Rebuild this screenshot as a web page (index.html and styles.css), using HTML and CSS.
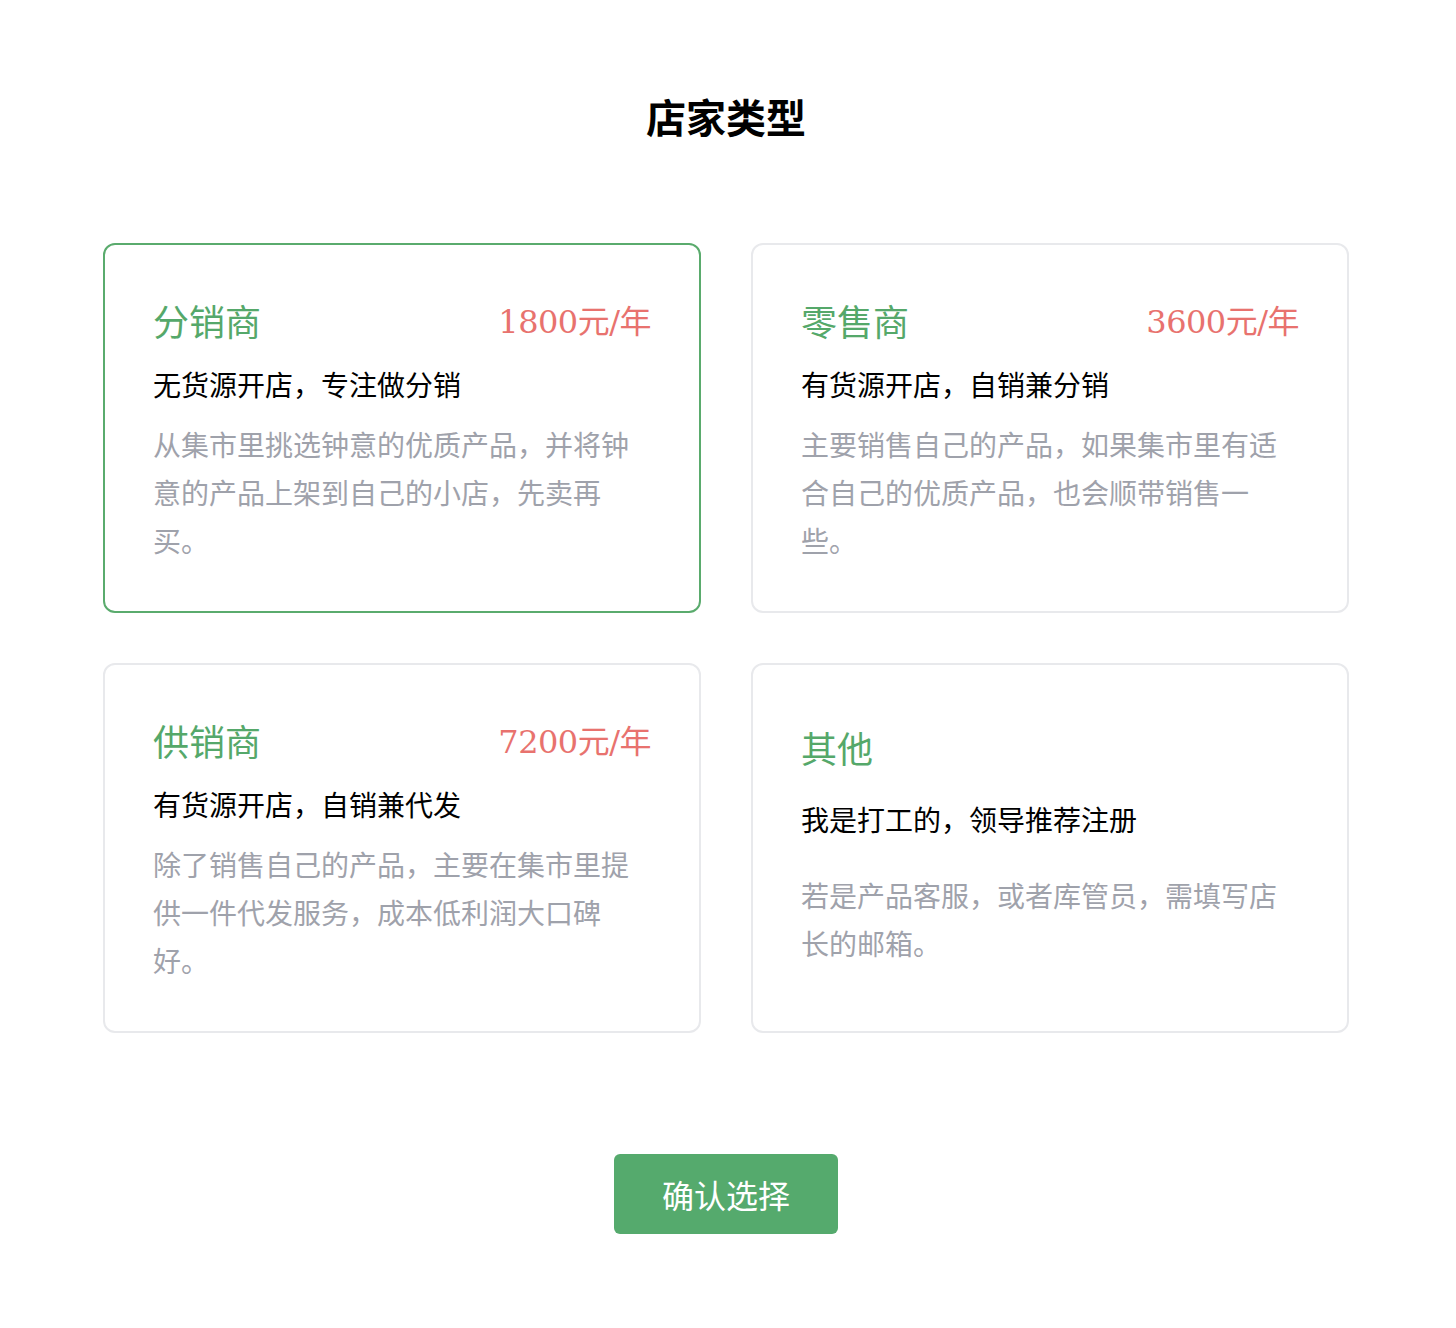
FILE: index.html
```html
<!DOCTYPE html>
<html lang="zh-CN">
<head>
<meta charset="utf-8">
<title>店家类型</title>
<link rel="stylesheet" href="styles.css">
</head>
<body>
<div class="page">
  <h1 class="page-title">店家类型</h1>
  <div class="grid">
    <div class="card selected">
      <div class="card-head"><span class="card-title">分销商</span><span class="price">1800元/年</span></div>
      <div class="card-sub">无货源开店，专注做分销</div>
      <div class="card-desc">从集市里挑选钟意的优质产品，并将钟意的产品上架到自己的小店，先卖再买。</div>
    </div>
    <div class="card">
      <div class="card-head"><span class="card-title">零售商</span><span class="price">3600元/年</span></div>
      <div class="card-sub">有货源开店，自销兼分销</div>
      <div class="card-desc">主要销售自己的产品，如果集市里有适合自己的优质产品，也会顺带销售一些。</div>
    </div>
    <div class="card">
      <div class="card-head"><span class="card-title">供销商</span><span class="price">7200元/年</span></div>
      <div class="card-sub">有货源开店，自销兼代发</div>
      <div class="card-desc">除了销售自己的产品，主要在集市里提供一件代发服务，成本低利润大口碑好。</div>
    </div>
    <div class="card other">
      <div class="card-head"><span class="card-title">其他</span></div>
      <div class="card-sub">我是打工的，领导推荐注册</div>
      <div class="card-desc">若是产品客服，或者库管员，需填写店长的邮箱。</div>
    </div>
  </div>
  <div class="actions"><button class="btn">确认选择</button></div>
</div>
</body>
</html>
```

FILE: styles.css
```css
* { box-sizing: border-box; }
body {
  margin: 0;
  background: #fff;
  font-family: "Noto Sans CJK SC", "Noto Sans", sans-serif;
}
.page {
  width: 1452px;
  padding-top: 88px;
  padding-bottom: 95px;
}
.page-title {
  margin: 0;
  text-align: center;
  font-size: 40px;
  line-height: 56px;
  font-weight: 700;
  color: #000;
}
.grid {
  margin: 99px auto 0;
  width: 1246px;
  display: grid;
  grid-template-columns: 598px 598px;
  grid-auto-rows: 370px;
  gap: 50px;
}
.card {
  border: 2px solid #e8e9ec;
  border-radius: 12px;
  padding: 47px 48px 48px;
}
.card.selected { border-color: #5aab6d; }
.card-head {
  display: flex;
  justify-content: space-between;
  align-items: center;
  height: 56px;
}
.card-title {
  font-size: 36px;
  color: #55a86a;
  line-height: 56px;
}
.price {
  font-family: "DejaVu Serif", "Liberation Serif", "Noto Sans CJK SC", serif;
  font-size: 32px;
  color: #e8726e;
  line-height: 56px;
  letter-spacing: -0.5px;
  position: relative;
  top: 2px;
}
.card-sub {
  margin-top: 15px;
  font-size: 28px;
  line-height: 42px;
  color: #000;
}
.card-desc {
  margin-top: 15px;
  font-size: 28px;
  line-height: 48px;
  color: #9fa2ab;
}
.card.other .card-head { height: 70px; }
.card.other .card-title { line-height: 70px; }
.card.other .card-sub { margin-top: 16px; }
.card.other .card-desc { margin-top: 31px; }
.actions {
  margin-top: 121px;
  display: flex;
  justify-content: center;
}
.btn {
  width: 224px;
  height: 80px;
  border: none;
  border-radius: 6px;
  background: #55aa6d;
  color: #fff;
  font-family: "Noto Sans CJK SC", sans-serif;
  font-size: 32px;
  padding: 0;
}
```
